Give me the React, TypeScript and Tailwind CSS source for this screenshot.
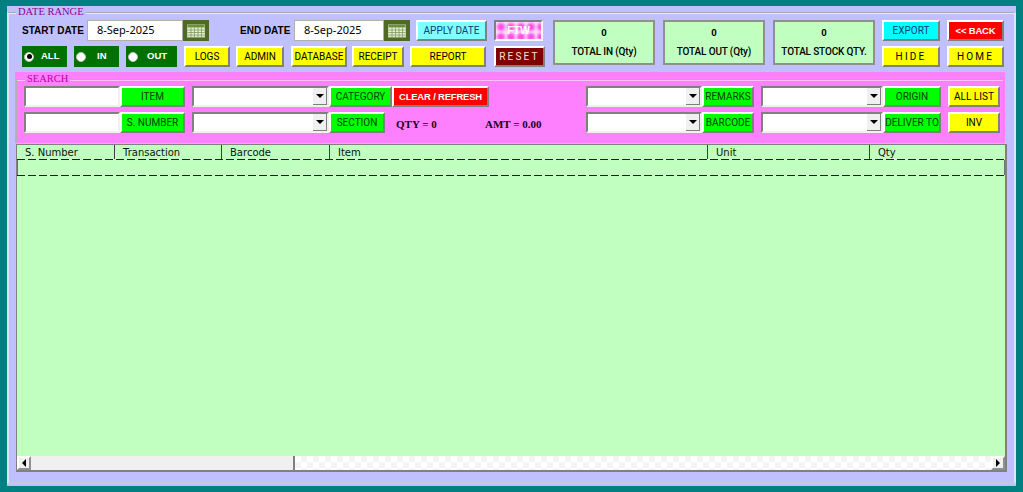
import React from "react";

const ui = "font-['Liberation_Sans',sans-serif]";
const raised = "border-2 border-t-white border-l-white border-r-[#808080] border-b-[#808080]";
const sunken = "border-2 border-t-[#808080] border-l-[#808080] border-r-[#f0f0f0] border-b-[#f0f0f0]";

function Btn({ w, bg, color = "text-black", children, extra = "font-['Roboto',sans-serif] text-[10px]" }: { w: string; bg: string; color?: string; children: React.ReactNode; extra?: string }) {
  return (
    <div className={`${w} ${bg} ${color} ${raised} ${extra} h-[21px] shrink-0 flex items-center justify-center leading-none whitespace-nowrap`}>
      {children}
    </div>
  );
}

function Cal() {
  return (
    <div className="w-[26px] h-[21px] shrink-0 bg-[#4f6b23] flex items-center justify-center">
      <svg width="20" height="15" viewBox="0 0 20 15">
        <rect x="1.500" y="2" width="17" height="12" fill="#e8f0d8" stroke="#c8d8b0" />
        <rect x="1.500" y="2" width="17" height="2.500" fill="#6b8f3a" />
        <path d="M1.500 7h17M1.500 9.500h17M1.500 12h17M5 4.500V14M8.500 4.500V14M12 4.500V14M15.500 4.500V14" stroke="#7f9a5a" strokeWidth="0.8" fill="none" />
      </svg>
    </div>
  );
}

function DateBox({ w, value }: { w: string; value: string }) {
  return (
    <div className={`${w} h-[21px] shrink-0 bg-white border border-[#b0b0b0] flex items-center pl-[9px] text-[11px] text-black font-['Noto_Sans',sans-serif]`}>
      {value}
    </div>
  );
}

function Radio({ w, label, on = false, gap }: { w: string; label: string; on?: boolean; gap: string }) {
  return (
    <div className={`${w} h-[21px] shrink-0 bg-[#007000] flex items-center pl-[2px] text-white text-[9.500px] font-bold font-['Liberation_Sans',sans-serif]`}>
      <div className="w-[10px] h-[10px] rounded-full bg-white flex items-center justify-center border border-[#c0c0c0]">
        {on && <div className="w-[5px] h-[5px] rounded-full bg-black" />}
      </div>
      <span className={gap}>{label}</span>
    </div>
  );
}

function Total({ title }: { title: string }) {
  return (
    <div className="w-[102px] h-[45px] shrink-0 bg-[#c0ffc0] border-2 border-[#909090] flex flex-col items-center text-black font-['Roboto',sans-serif] text-[10px] font-medium">
      <div className="h-[21px] pt-[3px] leading-[16px] font-bold text-[9.500px]">0</div>
      <div className="leading-[18px] whitespace-nowrap tracking-[-0.15px]">{title}</div>
    </div>
  );
}

function Combo({ w }: { w: string }) {
  return (
    <div className={`${w} ${sunken} h-[21px] shrink-0 bg-white flex justify-end`}>
      <div className="w-[14px] h-full bg-[#f0f0f0] border-r border-b border-[#808080] flex items-center justify-center">
        <div className="w-0 h-0 border-l-[4px] border-r-[4px] border-t-[4px] border-l-transparent border-r-transparent border-t-black" />
      </div>
    </div>
  );
}

function TextBox({ w }: { w: string }) {
  return <div className={`${w} ${sunken} h-[21px] shrink-0 bg-white`} />;
}

function DashLine() {
  return <div className="h-[1px] shrink-0 bg-[repeating-linear-gradient(90deg,#202020_0_8px,transparent_8px_11px)]" />;
}

const columns: [string, string][] = [
  ["S. Number", "w-[98px]"],
  ["Transaction", "w-[107px]"],
  ["Barcode", "w-[108px]"],
  ["Item", "w-[378px]"],
  ["Unit", "w-[162px]"],
  ["Qty", "flex-1"],
];

const green = "bg-[#00ff00]";
const yellow = "bg-[#ffff00]";
const boldBtn = "font-['Liberation_Sans',sans-serif] font-bold text-[9.500px] tracking-[-0.2px]";
const spaced = "font-['Roboto',sans-serif] text-[10px] tracking-[2.200px]";

export default function App() {
  return (
    <div className={`${ui} w-[1023px] h-[492px] bg-[#008080] pt-[6px] pl-[7px] overflow-hidden`}>
      <div className="w-[1009px] h-[480px] bg-[#c0c0ff]">
        <fieldset className="h-[478px] border-2 border-[#e4e4f0] border-t border-t-[#a8a8a8] border-b-[#c8c8d8] pl-[13px] shadow-[inset_0_1px_0_#e8e8f8]">
          <legend className="ml-[-6px] px-[2px] h-[12px] leading-[12px] text-[10.500px] text-[#900090] bg-[#c0c0ff] font-['Liberation_Serif',serif]">DATE RANGE</legend>

          <div className="flex pt-[2px]">
            <div className="w-[523px] shrink-0 flex flex-col gap-[5px]">
              <div className="flex items-center">
                <div className="w-[65px] shrink-0 text-[10px] font-bold text-black font-['Liberation_Sans',sans-serif]">START DATE</div>
                <DateBox w="w-[96px]" value="8-Sep-2025" />
                <Cal />
                <div className="ml-[31px] w-[54px] shrink-0 text-[10px] font-bold text-black font-['Liberation_Sans',sans-serif] whitespace-nowrap">END DATE</div>
                <DateBox w="w-[90px]" value="8-Sep-2025" />
                <Cal />
                <Btn w="w-[71px] ml-[6px]" bg="bg-[#80ffff]" color="text-[#004080]">APPLY DATE</Btn>
                <div className="w-[49px] ml-[7px] h-[21px] shrink-0 border-2 border-t-[#808080] border-l-[#808080] border-r-white border-b-white bg-[radial-gradient(circle,#ff50e8_25%,#ffd8f8_80%)] bg-[length:10px_10px] flex items-center justify-center text-white text-[10.500px] font-bold">FTW</div>
              </div>
              <div className="flex">
                <Radio w="w-[45px]" label="ALL" on gap="ml-[7px]" />
                <Radio w="w-[45px] ml-[7px]" label="IN" gap="ml-[11px]" />
                <Radio w="w-[51px] ml-[7px]" label="OUT" gap="ml-[9px]" />
                <Btn w="w-[46px] ml-[7px]" bg={yellow}>LOGS</Btn>
                <Btn w="w-[48px] ml-[6px]" bg={yellow}>ADMIN</Btn>
                <Btn w="w-[56px] ml-[7px]" bg={yellow}>DATABASE</Btn>
                <Btn w="w-[52px] ml-[5px]" bg={yellow}>RECEIPT</Btn>
                <Btn w="w-[76px] ml-[6px]" bg={yellow}>REPORT</Btn>
                <Btn w="w-[51px] ml-[8px]" bg="bg-[#800000]" color="text-[#ffe0d0]" extra={spaced}>RESET</Btn>
              </div>
            </div>
            <div className="flex gap-[8px] ml-[8px]">
              <Total title="TOTAL IN (Qty)" />
              <Total title="TOTAL OUT (Qty)" />
              <Total title="TOTAL STOCK QTY." />
            </div>
            <div className="flex flex-col gap-[5px] ml-[7px]">
              <div className="flex gap-[7px]">
                <Btn w="w-[58px]" bg="bg-[#00ffff]" color="text-[#004080]">EXPORT</Btn>
                <Btn w="w-[57px]" bg="bg-[#ff0000]" color="text-white" extra={boldBtn}>{"<< BACK"}</Btn>
              </div>
              <div className="flex gap-[7px]">
                <Btn w="w-[58px]" bg={yellow} extra={spaced}>HIDE</Btn>
                <Btn w="w-[57px]" bg={yellow} extra={spaced}>HOME</Btn>
              </div>
            </div>
          </div>

          <div className="w-[990px] h-[71px] mt-[5px] ml-[-7px] bg-[#ff80ff] pt-[1px]">
            <fieldset className="h-[69px] border border-[#b0b0b0] border-b-0 ml-[1px] mr-[1px] pl-[7px] shadow-[inset_0_1px_0_#ffc0ff]">
              <legend className="ml-[1px] px-[2px] h-[12px] leading-[12px] text-[10.500px] text-[#c000a0] bg-[#ff80ff] font-['Liberation_Serif',serif]">SEARCH</legend>
              <div className="flex flex-col gap-[5px] pt-[1px]">
                <div className="flex">
                  <TextBox w="w-[96px]" />
                  <Btn w="w-[65px]" bg={green} color="text-[#004000]">ITEM</Btn>
                  <Combo w="w-[137px] ml-[7px]" />
                  <Btn w="w-[63px]" bg={green} color="text-[#004000]">CATEGORY</Btn>
                  <Btn w="w-[97px]" bg="bg-[#ff0000]" color="text-white" extra={boldBtn}>CLEAR / REFRESH</Btn>
                  <Combo w="w-[116px] ml-[97px]" />
                  <Btn w="w-[52px]" bg={green} color="text-[#004000]">REMARKS</Btn>
                  <Combo w="w-[122px] ml-[7px]" />
                  <Btn w="w-[58px]" bg={green} color="text-[#004000]">ORIGIN</Btn>
                  <Btn w="w-[52px] ml-[7px]" bg={yellow}>ALL LIST</Btn>
                </div>
                <div className="flex">
                  <TextBox w="w-[96px]" />
                  <Btn w="w-[65px]" bg={green} color="text-[#004000]">S. NUMBER</Btn>
                  <Combo w="w-[137px] ml-[7px]" />
                  <Btn w="w-[56px]" bg={green} color="text-[#004000]">SECTION</Btn>
                  <div className="w-[89px] ml-[11px] mt-[3px] shrink-0 self-center text-[11px] font-bold text-[#200020] font-['Liberation_Serif',serif]">QTY = 0</div>
                  <div className="w-[101px] mt-[3px] shrink-0 self-center text-[11px] font-bold text-[#200020] font-['Liberation_Serif',serif]">AMT = 0.00</div>
                  <Combo w="w-[116px]" />
                  <Btn w="w-[52px]" bg={green} color="text-[#004000]">BARCODE</Btn>
                  <Combo w="w-[122px] ml-[7px]" />
                  <Btn w="w-[58px]" bg={green} color="text-[#004000]">DELIVER TO</Btn>
                  <Btn w="w-[52px] ml-[7px]" bg={yellow}>INV</Btn>
                </div>
              </div>
            </fieldset>
          </div>

          <div className="w-[991px] h-[328px] mt-[1px] ml-[-6px] border border-[#808080] border-r-2 border-b-2 bg-[#c0ffc0] flex flex-col">
            <div className="h-[14px] shrink-0 flex">
              {columns.map(([name, w]) => (
                <div key={name} className={`${w} shrink-0 border-r border-[#404040] last:border-r-0 pl-[8px] text-[10px] leading-[15px] text-[#101010] font-['DejaVu_Sans',sans-serif]`}>
                  {name}
                </div>
              ))}
            </div>
            <DashLine />
            <div className="h-[15px] shrink-0 border-l border-r border-[#707070]" />
            <DashLine />
            <div className="flex-1" />
            <div className="h-[14px] shrink-0 flex">
              <div className="w-[14px] shrink-0 bg-[#f0f0f0] border-2 border-t-white border-l-white border-r-[#909090] border-b-[#909090] flex items-center justify-center">
                <div className="w-0 h-0 border-t-[4px] border-b-[4px] border-r-[4px] border-t-transparent border-b-transparent border-r-black" />
              </div>
              <div className="w-[264px] shrink-0 bg-[#f0f0f0] border-r-2 border-[#808080]" />
              <div className="flex-1 bg-[repeating-conic-gradient(#f4f4f4_0_25%,#ffffff_0_50%)] bg-[length:12px_12px]" />
              <div className="w-[14px] shrink-0 bg-[#f0f0f0] border-2 border-t-white border-l-white border-r-[#909090] border-b-[#909090] flex items-center justify-center">
                <div className="w-0 h-0 border-t-[4px] border-b-[4px] border-l-[4px] border-t-transparent border-b-transparent border-l-black" />
              </div>
            </div>
          </div>
        </fieldset>
      </div>
    </div>
  );
}
